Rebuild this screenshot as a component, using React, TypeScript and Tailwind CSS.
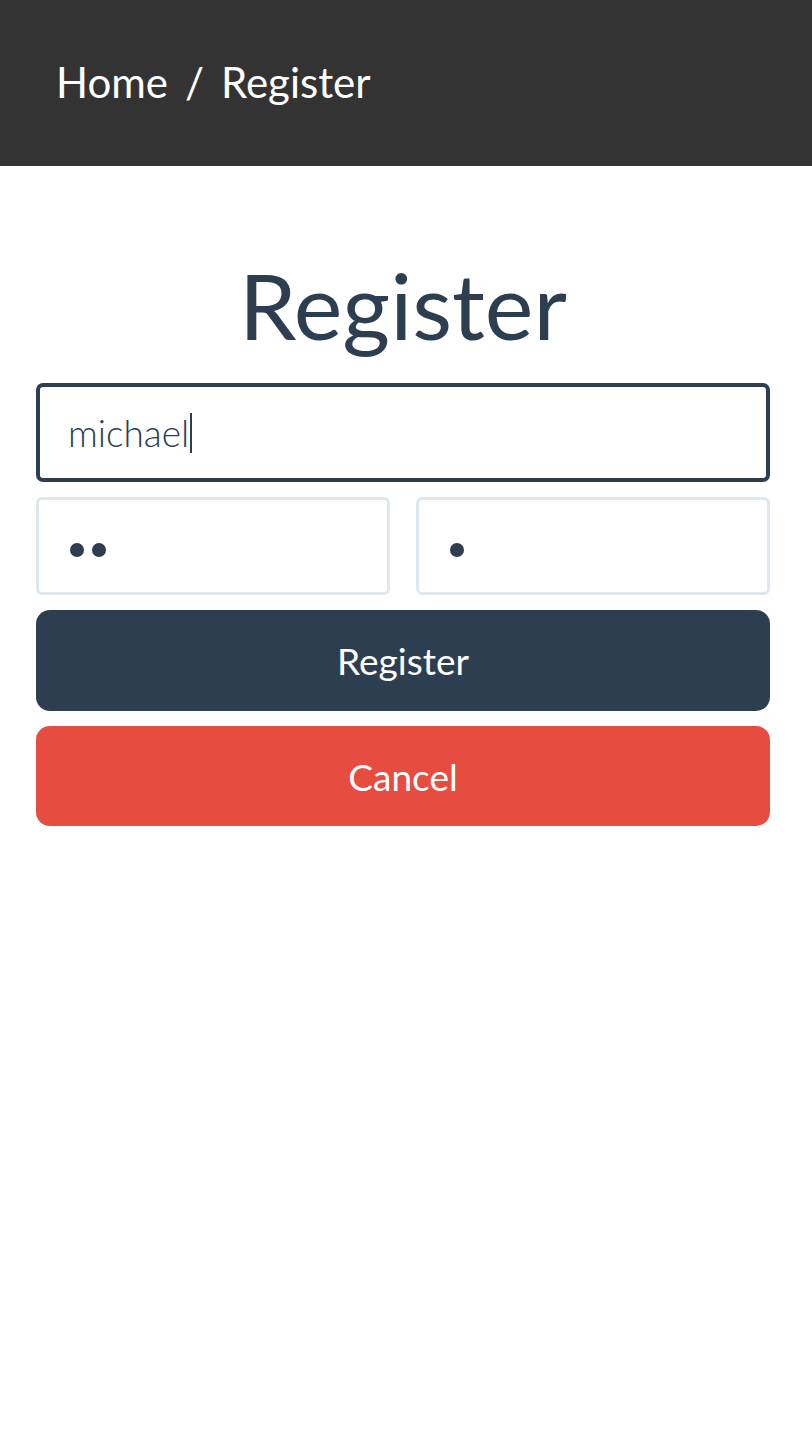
import React from "react";

export default function App() {
  return (
    <div className="min-h-[1436px] w-[812px] bg-white" style={{ fontFamily: "Lato, 'Open Sans', sans-serif" }}>
      <header className="h-[166px] bg-[#333333] flex items-center pl-[56px]">
        <span className="text-white text-[42px] leading-none pb-[2px]">
          Home<span className="mx-[17px]">/</span>Register
        </span>
      </header>
      <main className="pl-[36px] pr-[42px] pt-[93px]">
        <h1 className="text-center text-[#2c3e50] text-[92px] leading-none">Register</h1>
        <div className="mt-[32px] flex flex-col gap-[15px]">
          <div className="h-[99px] border-[4px] border-[#2c3e50] rounded-[7px] flex items-center pl-[28px]">
            <span className="text-[#2c3e50] text-[37px] font-light leading-none">michael</span>
            <span className="w-[2px] h-[40px] bg-[#2c3e50] ml-[1px]" />
          </div>
          <div className="flex gap-[26px]">
            <div className="flex-1 h-[98px] border-[3px] border-[#dfe7ef] rounded-[6px] flex items-center pl-[31px] pt-[8px] gap-[8px]">
              <span className="w-[14px] h-[14px] rounded-full bg-[#2c3e50]" />
              <span className="w-[14px] h-[14px] rounded-full bg-[#2c3e50]" />
            </div>
            <div className="flex-1 h-[98px] border-[3px] border-[#dfe7ef] rounded-[6px] flex items-center pl-[31px] pt-[8px]">
              <span className="w-[14px] h-[14px] rounded-full bg-[#2c3e50]" />
            </div>
          </div>
          <button className="h-[101px] rounded-[14px] bg-[#2e3e51] text-white text-[37px] leading-none flex items-center justify-center">Register</button>
          <button className="h-[100px] rounded-[14px] bg-[#e74c40] text-white text-[37px] leading-none flex items-center justify-center">Cancel</button>
        </div>
      </main>
    </div>
  );
}
